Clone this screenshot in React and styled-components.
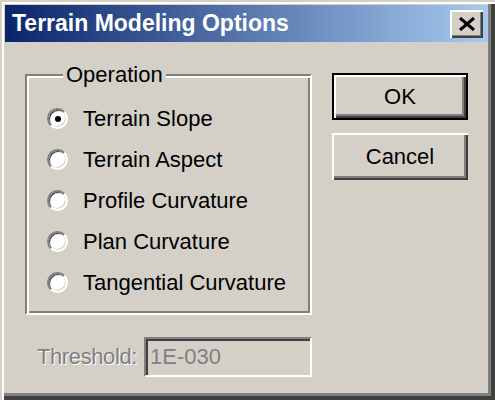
import React from 'react'
import styled, { createGlobalStyle } from 'styled-components'

const GlobalStyle = createGlobalStyle`
  body {
    margin: 0;
    background: #d4d0c8;
    font-family: "Liberation Sans", Arial, sans-serif;
  }
`

const Window = styled.div`
  width: 495px;
  height: 400px;
  box-sizing: border-box;
  padding: 5px 7px 7px 5px;
  background: #d4d0c8;
  box-shadow:
    inset 2px 2px 0 #d4d0c8,
    inset 4px 4px 0 #ffffff,
    inset -4px -4px 0 #404040,
    inset -7px -7px 0 #808080;
  display: flex;
  flex-direction: column;
`

const TitleBar = styled.div`
  height: 37px;
  display: flex;
  align-items: center;
  justify-content: space-between;
  padding: 0 5px 0 7px;
  background: linear-gradient(90deg, #0a246a 0%, #a6caf0 100%);
`

const Title = styled.span`
  color: #ffffff;
  font-weight: 700;
  font-size: 23px;
`

const CloseButton = styled.button`
  width: 33px;
  height: 28px;
  padding: 0;
  border: none;
  background: #d4d0c8;
  display: flex;
  align-items: center;
  justify-content: center;
  box-shadow:
    inset 2px 2px 0 #ffffff,
    inset -2px -2px 0 #404040,
    inset -3px -3px 0 #808080;
`

const Body = styled.div`
  display: flex;
  flex: 1;
`

const LeftColumn = styled.div`
  width: 287px;
  flex-shrink: 0;
  display: flex;
  flex-direction: column;
  padding: 21px 0 0 20px;
`

const RightColumn = styled.div`
  display: flex;
  flex-direction: column;
  gap: 13px;
  padding: 31px 0 0 20px;
`

const GroupBox = styled.fieldset`
  width: 287px;
  height: 252px;
  box-sizing: border-box;
  margin: 0;
  padding: 11px 0 0 20px;
  border: 2px solid;
  border-color: #808080 #ffffff #ffffff #808080;
  box-shadow:
    inset 2px 2px 0 #ffffff,
    inset -2px -2px 0 #808080;
`

const Legend = styled.legend`
  margin-left: 16px;
  padding: 0 3px;
  font-size: 22px;
  line-height: 24px;
  color: #000000;
  background: #d4d0c8;
`

const OptionRow = styled.label`
  display: flex;
  align-items: center;
  height: 41px;
  font-size: 22px;
  color: #000000;
  gap: 15px;
`

const RadioCircle = styled.span`
  width: 21px;
  height: 21px;
  box-sizing: border-box;
  border-radius: 50%;
  background: #ffffff;
  border: 2px solid;
  border-color: #808080 #ffffff #ffffff #808080;
  box-shadow:
    inset 1px 1px 0 #404040,
    inset -1px -1px 0 #d4d0c8;
  display: flex;
  align-items: center;
  justify-content: center;
  &::after {
    content: '';
    width: 6px;
    height: 6px;
    border-radius: 50%;
    background: #000000;
    display: ${p => (p.$checked ? 'block' : 'none')};
  }
`

const ThresholdRow = styled.div`
  display: flex;
  align-items: center;
  justify-content: space-between;
  margin: 22px 0 0 12px;
`

const DisabledLabel = styled.span`
  font-size: 22px;
  letter-spacing: -0.4px;
  color: #808080;
  text-shadow: 1px 1px 0 #ffffff;
`

const TextField = styled.div`
  width: 168px;
  height: 40px;
  flex-shrink: 0;
  box-sizing: border-box;
  padding: 0 4px;
  display: flex;
  align-items: center;
  font-size: 22px;
  color: #808080;
  background: #d4d0c8;
  border: 2px solid;
  border-color: #808080 #ffffff #ffffff #808080;
  box-shadow:
    inset 2px 2px 0 #404040,
    inset -2px -2px 0 #d4d0c8;
`

const Button = styled.button`
  width: 136px;
  height: 47px;
  box-sizing: border-box;
  padding: 0;
  font-family: "Liberation Sans", Arial, sans-serif;
  font-size: 22px;
  color: #000000;
  background: #d4d0c8;
  border: ${p => (p.$default ? '2px solid #000000' : 'none')};
  box-shadow:
    inset 2px 2px 0 #ffffff,
    inset -2px -2px 0 #404040,
    inset -4px -4px 0 #808080;
`

const options = [
  'Terrain Slope',
  'Terrain Aspect',
  'Profile Curvature',
  'Plan Curvature',
  'Tangential Curvature'
]

const App = () => (
  <>
    <GlobalStyle />
    <Window>
      <TitleBar>
        <Title>Terrain Modeling Options</Title>
        <CloseButton>
          <svg width="18" height="14" viewBox="0 0 18 14">
            <path d="M2 1 L16 13 M16 1 L2 13" stroke="#000" strokeWidth="3" />
          </svg>
        </CloseButton>
      </TitleBar>
      <Body>
        <LeftColumn>
          <GroupBox>
            <Legend>Operation</Legend>
            {options.map((label, i) => (
              <OptionRow key={label}>
                <RadioCircle $checked={i === 0} />
                {label}
              </OptionRow>
            ))}
          </GroupBox>
          <ThresholdRow>
            <DisabledLabel>Threshold:</DisabledLabel>
            <TextField>1E-030</TextField>
          </ThresholdRow>
        </LeftColumn>
        <RightColumn>
          <Button $default>OK</Button>
          <Button>Cancel</Button>
        </RightColumn>
      </Body>
    </Window>
  </>
)

export default App
